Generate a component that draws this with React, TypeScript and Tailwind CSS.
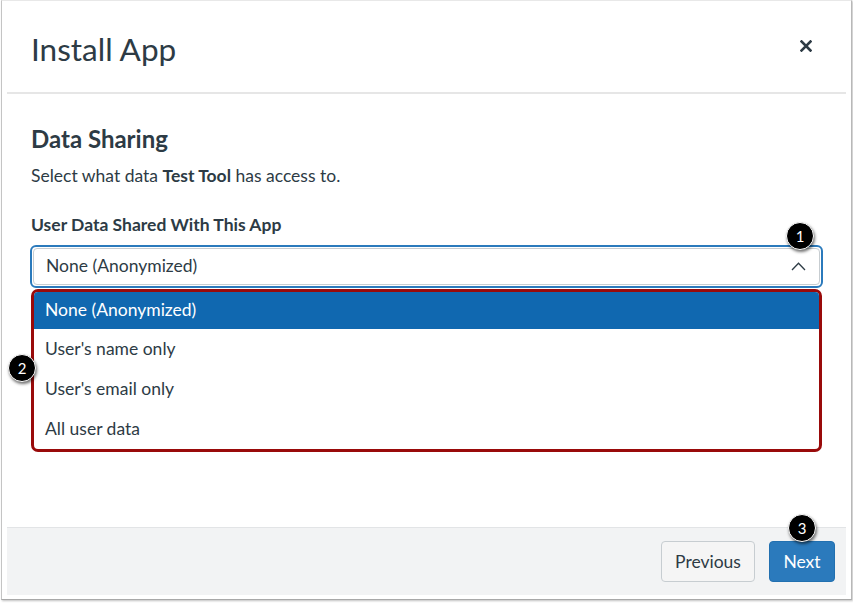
import React from "react";

function Badge({ n, className }: { n: string; className: string }) {
  return (
    <div
      className={
        "absolute w-[28px] h-[28px] rounded-full bg-black border border-white text-white flex items-center justify-center text-[15px] leading-none shadow-[1px_2px_3px_rgba(0,0,0,0.55)] " +
        className
      }
    >
      {n}
    </div>
  );
}

export default function App() {
  const font = { fontFamily: "Lato, 'Open Sans', sans-serif" };
  return (
    <div className="w-[853px] h-[603px] bg-white pl-[1px] relative overflow-hidden text-[#2d3b45]" style={font}>
      <div className="w-[851px] h-[600px] border-l border-r border-b border-t border-t-[#e8e8e8] border-l-[#c4c4c4] border-r-[#b8b8b8] border-b-[#a8a8a8] shadow-[1px_1px_2px_rgba(0,0,0,0.25)] px-[5px] pb-[4px] flex flex-col">
        <div className="h-[93px] flex items-center justify-between pl-[24px] pr-[34px] border-b-2 border-[#e6e6e6] pt-[4px]">
          <div className="text-[31.5px] leading-[40px]">Install App</div>
          <svg width="12" height="12" viewBox="0 0 12 12" className="mt-[-6px]">
            <path d="M1.5 1.5 L10.5 10.5 M10.5 1.5 L1.5 10.5" stroke="#2d3b45" strokeWidth="2.6" strokeLinecap="square" />
          </svg>
        </div>
        <div className="px-[24px] pt-[30px] flex-1">
          <div className="text-[24px] leading-[30px] font-bold">Data Sharing</div>
          <div className="text-[17.5px] leading-[24px] mt-[10px]">
            Select what data <span className="font-bold">Test Tool</span> has access to.
          </div>
          <div className="text-[17.5px] leading-[24px] font-bold mt-[25px]">User Data Shared With This App</div>
          <div className="mt-[8px] mx-[-1px] h-[43px] border-2 border-[#2b7abc] rounded-[6px] p-[1px]">
            <div className="h-full border border-[#c7cdd1] rounded-[4px] flex items-center justify-between pl-[12px] pr-[13px] text-[17.5px]">
              <span>None (Anonymized)</span>
              <svg width="15" height="9" viewBox="0 0 15 9">
                <path d="M1 8 L7.5 1.2 L14 8" fill="none" stroke="#2d3b45" strokeWidth="1.3" />
              </svg>
            </div>
          </div>
          <div className="mt-[1px] border-[3px] border-[#990a0a] rounded-[7px] overflow-hidden text-[17.5px]">
            <div className="h-[37px] bg-[#1068b0] text-white flex items-center pl-[11px]">None (Anonymized)</div>
            <div className="h-[40px] flex items-center pl-[11px]">User's name only</div>
            <div className="h-[40px] flex items-center pl-[11px]">User's email only</div>
            <div className="h-[40px] flex items-center pl-[11px]">All user data</div>
          </div>
        </div>
        <div className="h-[68px] bg-[#f2f3f4] border-t border-[#e2e4e6] flex items-center justify-end gap-[14px] pr-[11px]">
          <button className="h-[41px] w-[94px] bg-[#f5f5f5] border border-[#c7cdd1] rounded-[4px] text-[17.5px] text-[#2d3b45] pt-[1px]">
            Previous
          </button>
          <button className="h-[41px] w-[66px] bg-[#2b7abc] border border-[#2270b0] rounded-[4px] text-[17.5px] text-white pt-[1px]">
            Next
          </button>
        </div>
      </div>
      <Badge n="1" className="left-[786px] top-[222px]" />
      <Badge n="2" className="left-[8px] top-[354px]" />
      <Badge n="3" className="left-[788px] top-[514px]" />
    </div>
  );
}
